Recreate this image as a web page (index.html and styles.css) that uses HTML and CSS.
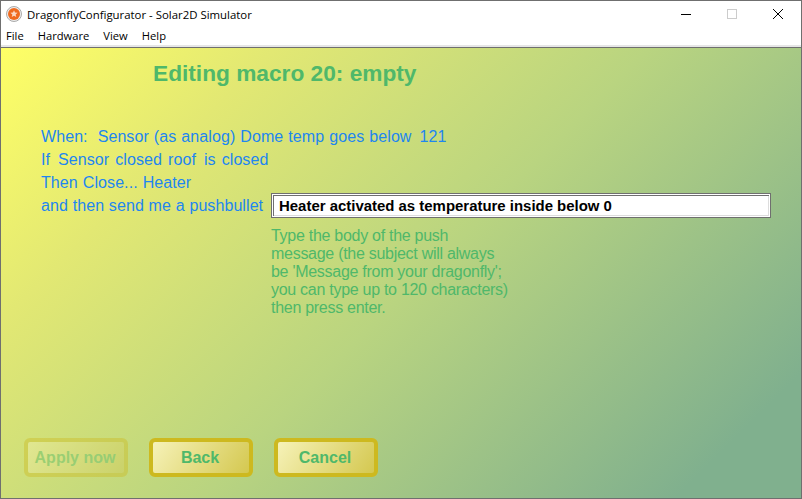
FILE: index.html
```html
<!DOCTYPE html>
<html lang="en">
<head>
<meta charset="utf-8">
<title>DragonflyConfigurator - Solar2D Simulator</title>
<link rel="stylesheet" href="styles.css">
</head>
<body>
<div class="window">
  <header class="titlebar">
    <svg class="app-icon" width="16" height="16" viewBox="0 0 16 16">
      <circle cx="8" cy="8" r="7.5" fill="#eee" stroke="#aaa" stroke-width="1"/>
      <circle cx="8" cy="8" r="6" fill="#ef6a1f"/>
      <path d="M8 4.2 9 6.6 11.6 6.8 9.6 8.5 10.3 11 8 9.7 5.7 11 6.4 8.5 4.4 6.8 7 6.6Z" fill="#fff" opacity=".75"/>
    </svg>
    <span class="title">DragonflyConfigurator - Solar2D Simulator</span>
    <div class="controls">
      <span class="ctl"><svg width="12" height="12" viewBox="0 0 12 12"><path d="M1 6.5H11" stroke="#000" stroke-width="1"/></svg></span>
      <span class="ctl"><svg width="12" height="12" viewBox="0 0 12 12"><rect x="1.5" y="1.5" width="9" height="9" fill="none" stroke="#ccc"/></svg></span>
      <span class="ctl"><svg width="12" height="12" viewBox="0 0 12 12"><path d="M1 1 11 11M11 1 1 11" stroke="#000" stroke-width="1"/></svg></span>
    </div>
  </header>
  <nav class="menubar">
    <span>File</span><span>Hardware</span><span>View</span><span>Help</span>
  </nav>
  <main class="canvas">
    <h1 class="heading">Editing macro 20: empty</h1>
    <div class="rule">
      <p class="line">When:<span class="gap wide"></span>Sensor (as analog) Dome temp goes below<span class="gap"></span>121</p>
      <p class="line spaced">If<span class="gap"></span>Sensor closed roof<span class="gap"></span>is closed</p>
      <p class="line">Then Close... Heater</p>
      <div class="line-row">
        <p class="line label">and then send me a pushbullet</p>
        <input class="field" type="text" value="Heater activated as temperature inside below 0">
      </div>
    </div>
    <p class="hint">Type the body of the push<br>message (the subject will always<br>be 'Message from your dragonfly';<br>you can type up to 120 characters)<br>then press enter.</p>
    <div class="actions">
      <button class="btn disabled">Apply now</button>
      <button class="btn">Back</button>
      <button class="btn">Cancel</button>
    </div>
  </main>
</div>
</body>
</html>
```
FILE: styles.css
```css
* { box-sizing: border-box; }
html, body { margin: 0; padding: 0; }
body { width: 802px; height: 499px; overflow: hidden; background: #fff; font-family: "Liberation Sans", Arial, sans-serif; }
.window { width: 802px; height: 499px; display: flex; flex-direction: column; border: 1px solid #6f6f6f; }
.titlebar { height: 26px; flex: none; display: flex; align-items: center; padding-left: 5px; background: #fff; }
.app-icon { flex: none; margin-right: 5px; }
.title { font: 11.4px "Open Sans", sans-serif; color: #000; white-space: nowrap; }
.controls { margin-left: auto; display: flex; height: 100%; }
.ctl { width: 46px; display: flex; align-items: center; justify-content: center; }
.menubar { height: 18px; flex: none; display: flex; gap: 14px; padding: 0 0 2px 5px; align-items: center; background: #fff; font: 11.2px "Open Sans", sans-serif; color: #000; }
.canvas { flex: 1; min-height: 0; display: flex; flex-direction: column; border-top: 2px solid #e6e6e6; box-shadow: inset 0 1px 0 #6f6f6f; background: linear-gradient(135deg, #ffff66 0%, #e2e873 22%, #b9d480 52%, #80b08e 90%, #80b08e 100%); }
.heading { margin: 12px 0 0 152px; font-size: 22.7px; line-height: 28px; font-weight: 700; color: #4fb86a; white-space: nowrap; }
.rule { margin: 38px 0 0 40px; display: flex; flex-direction: column; }
.line { margin: 0; font-size: 16px; line-height: 23px; height: 23px; color: #1e86f0; white-space: nowrap; letter-spacing: .08px; word-spacing: .5px; }
.spaced { word-spacing: 1.5px; }
.gap { display: inline-block; width: 8px; }
.gap.wide { width: 10px; }
.line-row { display: flex; align-items: center; margin-top: -1px; }
.label { width: 230px; flex: none; word-spacing: .2px; }
.field { width: 500px; height: 25px; flex: none; border: 1px solid #6f6f6f; box-shadow: inset 0 0 0 1px #fff, inset 2px 2px 0 #6f6f6f, inset -2px -2px 0 #ddd; background: #fff; padding: 0 7px; font: 700 14.95px "Liberation Sans", sans-serif; color: #000; outline: 0; }
.hint { margin: 9px 0 0 270px; font-size: 16px; line-height: 18px; color: #4fb86a; letter-spacing: -0.28px; }
.actions { margin: auto 0 21px 23px; display: flex; gap: 21px; }
.btn { width: 104px; height: 39px; padding: 0 2px 0 0; border: 4px solid #cdb91f; border-radius: 6px; background: linear-gradient(125deg, #f6f2b8, #d4c850); font: 700 16px "Liberation Sans", sans-serif; color: #4fb86a; }
.btn.disabled { opacity: .4; }
```
